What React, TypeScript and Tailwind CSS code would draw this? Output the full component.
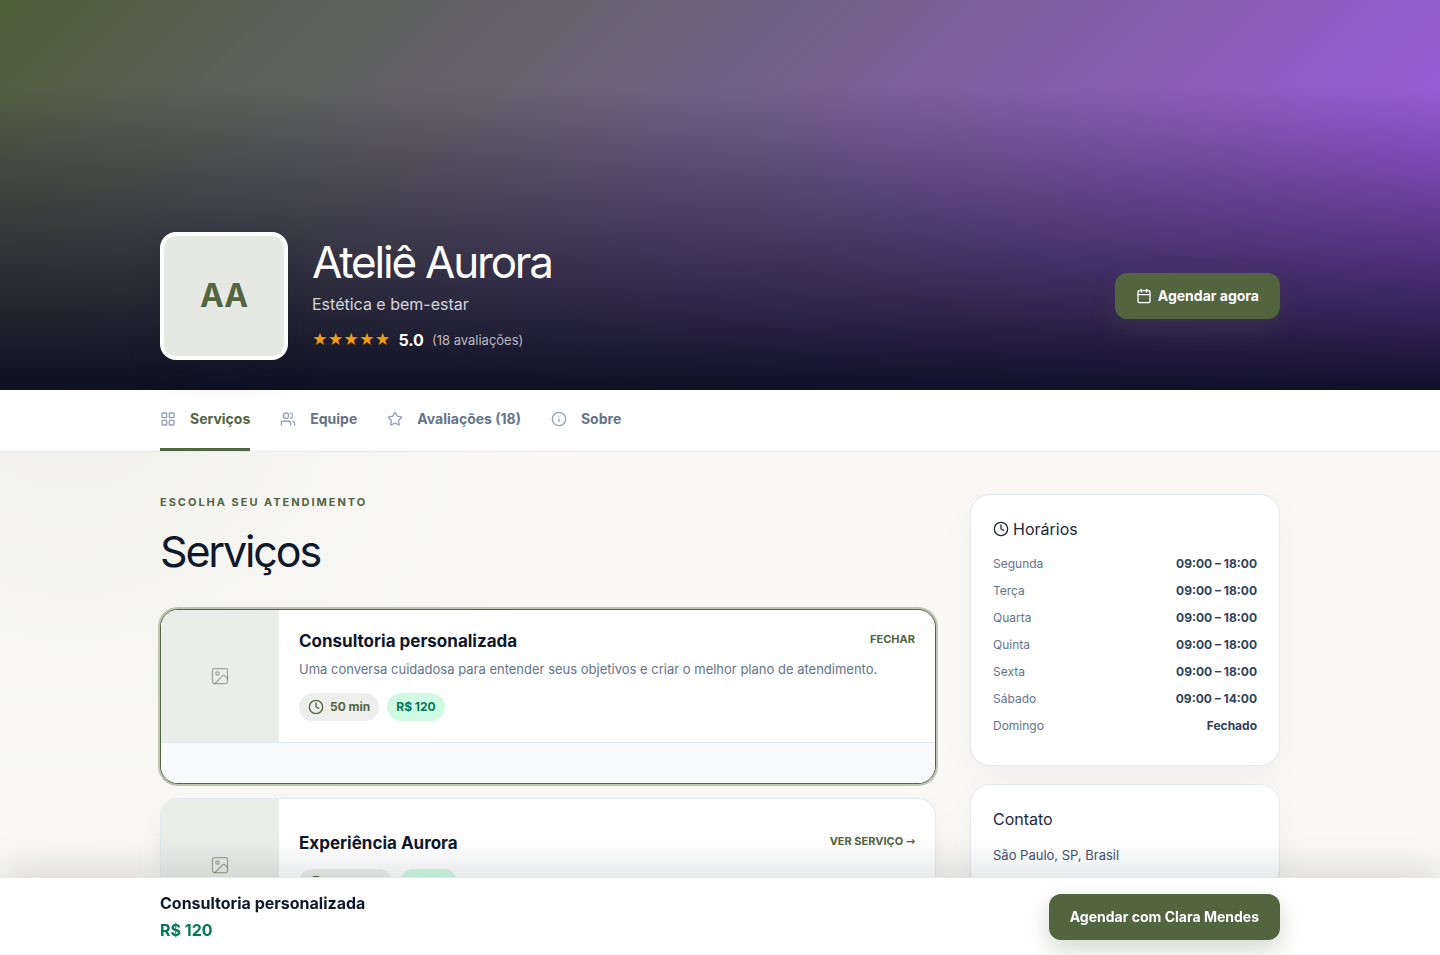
import { Calendar, Clock, Image, Info, LayoutGrid, Star, Users } from "lucide-react";

interface Service {
  name: string;
  description?: string;
  duration: string;
  price: string;
  open: boolean;
}

const services: Service[] = [
  {
    name: "Consultoria personalizada",
    description: "Uma conversa cuidadosa para entender seus objetivos e criar o melhor plano de atendimento.",
    duration: "50 min",
    price: "R$ 120",
    open: true,
  },
  { name: "Experiência Aurora", duration: "1h 20min", price: "R$ 180", open: false },
];

const tabs = [
  { label: "Serviços", icon: LayoutGrid, active: true },
  { label: "Equipe", icon: Users, active: false },
  { label: "Avaliações (18)", icon: Star, active: false },
  { label: "Sobre", icon: Info, active: false },
];

const hours = [
  ["Segunda", "09:00 – 18:00"],
  ["Terça", "09:00 – 18:00"],
  ["Quarta", "09:00 – 18:00"],
  ["Quinta", "09:00 – 18:00"],
  ["Sexta", "09:00 – 18:00"],
  ["Sábado", "09:00 – 14:00"],
  ["Domingo", "Fechado"],
];

const Hero = () => (
  <header className="flex h-[390px] items-end bg-[linear-gradient(180deg,rgba(8,11,29,0)_22%,rgba(8,11,29,0.94)_100%),linear-gradient(135deg,#4d603b_0%,#6b6276_36%,#a85af7_100%)] pb-[30px]">
    <div className="mx-auto flex w-full max-w-[1120px] items-center gap-6">
      <div className="flex size-32 shrink-0 items-center justify-center rounded-2xl border-4 border-white bg-[#e6e9e3] text-[32px] font-bold text-[#526440] shadow-[0_12px_30px_rgba(15,23,42,0.25)]">
        AA
      </div>
      <div className="flex-1">
        <h1 className="text-[44px] leading-[48px] tracking-tighter text-white">Ateliê Aurora</h1>
        <p className="mt-1 text-base leading-7 text-white/80">Estética e bem-estar</p>
        <div className="mt-2 flex items-center gap-2 leading-7">
          <span className="text-[15px] text-[#f59e0b]" aria-label="5 de 5 estrelas">★★★★★</span>
          <strong className="text-base leading-7 font-bold text-white">5.0</strong>
          <span className="text-[13px] text-white/70">(18 avaliações)</span>
        </div>
      </div>
      <button className="flex h-[46px] items-center gap-1.5 rounded-xl bg-[#526440] px-[21px] text-sm font-bold text-white shadow-[0_10px_24px_rgba(82,100,64,0.25)]">
        <Calendar className="size-4" strokeWidth={2} />
        Agendar agora
      </button>
    </div>
  </header>
);

const TabBar = () => (
  <nav className="border-b border-slate-200 bg-white">
    <div className="mx-auto flex max-w-[1120px] gap-[30px]">
      {tabs.map(({ label, icon: Icon, active }) => (
        <a
          key={label}
          href="#"
          className={`flex h-[61px] items-center gap-3.5 border-b-3 text-sm font-bold ${
            active ? "border-[#526440] text-[#526440]" : "border-transparent text-[#64748b]"
          }`}
        >
          <Icon className="size-4 text-[#94a3b8]" strokeWidth={2} />
          {label}
        </a>
      ))}
    </div>
  </nav>
);

const ServiceCard = ({ service }: { service: Service }) => (
  <article
    className={`overflow-hidden rounded-[18px] border bg-white ${
      service.open
        ? "border-[#526440] shadow-[0_0_0_2px_rgba(82,100,64,0.35)]"
        : "border-slate-200 shadow-[0_10px_30px_rgba(15,23,42,0.06)]"
    }`}
  >
    <div className="flex min-h-[132px]">
      <div className="flex w-[118px] shrink-0 items-center justify-center bg-[#ebede9] text-[#526440]/50">
        <Image className="size-5" strokeWidth={1.5} />
      </div>
      <div className="flex flex-1 items-center px-5 pb-0.5">
        <div className="flex-1">
          <div className="flex items-start justify-between">
            <h3 className="text-[17px] leading-6 font-bold text-slate-900">{service.name}</h3>
            <button className="text-[11px] leading-5 font-bold text-[#526440] uppercase">
              {service.open ? (
                "Fechar"
              ) : (
                <>
                  Ver serviço <span className="font-['DejaVu_Sans',sans-serif]">→</span>
                </>
              )}
            </button>
          </div>
          {service.description && (
            <p className="mt-1.5 mb-0.5 text-[13px] leading-5 text-[#64748b]">{service.description}</p>
          )}
          <div className="mt-3.5 flex gap-2">
            <span className="flex h-7 items-center gap-1.5 rounded-full bg-[#eeefec] px-[9px] text-xs font-bold text-[#526440]">
              <Clock className="size-4" />
              {service.duration}
            </span>
            <span className="flex h-7 items-center rounded-full bg-[#d1fae5] px-[9px] text-xs font-bold text-[#047857]">
              {service.price}
            </span>
          </div>
        </div>
      </div>
    </div>
    {service.open && <div className="h-[41px] border-t border-slate-200 bg-slate-50" />}
  </article>
);

const Sidebar = () => (
  <aside className="flex w-[310px] shrink-0 flex-col gap-[18px]">
    <section className="rounded-[20px] border border-slate-200 bg-white px-[22px] pt-5 pb-[26px] shadow-[0_10px_30px_rgba(15,23,42,0.05)]">
      <h2 className="flex items-center gap-1 text-base leading-7 text-slate-800">
        <Clock className="size-4" />
        Horários
      </h2>
      <table className="mt-[7px] w-full text-xs">
        <tbody>
          {hours.map(([day, time]) => (
            <tr key={day} className="h-[27px]">
              <th scope="row" className="text-left font-normal text-[#64748b]">{day}</th>
              <td className="text-right font-bold text-slate-700">{time}</td>
            </tr>
          ))}
        </tbody>
      </table>
    </section>
    <section className="rounded-[20px] border border-slate-200 bg-white px-[22px] pt-5 pb-[26px] shadow-[0_10px_30px_rgba(15,23,42,0.05)]">
      <h2 className="text-base leading-7 text-slate-800">Contato</h2>
      <p className="mt-3 text-[13px] leading-5 text-slate-600">São Paulo, SP, Brasil</p>
    </section>
  </aside>
);

const BookingBar = () => (
  <div className="fixed inset-x-0 bottom-0 border-t border-slate-200 bg-white pt-px shadow-[0_-12px_35px_rgba(15,23,42,0.12)]">
    <div className="mx-auto flex h-[76px] max-w-[1120px] items-center justify-between">
      <div className="text-base leading-[27px] font-bold">
        <p className="text-slate-900">Consultoria personalizada</p>
        <p className="text-[#047857]">R$ 120</p>
      </div>
      <button className="h-[46px] rounded-xl bg-[#526440] px-[21px] text-sm font-bold text-white shadow-[0_10px_24px_rgba(82,100,64,0.25)]">
        Agendar com Clara Mendes
      </button>
    </div>
  </div>
);

export default function App() {
  return (
    <div className="h-screen overflow-hidden bg-[#faf9f6] bg-[radial-gradient(circle_at_5%_40%,rgba(82,100,64,0.05),transparent_35%)] font-['Inter',sans-serif]">
      <Hero />
      <TabBar />
      <main className="mx-auto flex max-w-[1120px] items-start gap-[34px] pt-[42px]">
        <div className="min-w-0 flex-1">
          <p className="text-[11px] leading-4 font-bold tracking-[0.18em] text-[#526440] uppercase">
            Escolha seu atendimento
          </p>
          <h2 className="mt-[15px] text-[43px] leading-[52px] tracking-tighter text-slate-900">Serviços</h2>
          <div className="mt-8 flex flex-col gap-3.5">
            {services.map((service) => (
              <ServiceCard key={service.name} service={service} />
            ))}
          </div>
        </div>
        <Sidebar />
      </main>
      <BookingBar />
    </div>
  );
}
